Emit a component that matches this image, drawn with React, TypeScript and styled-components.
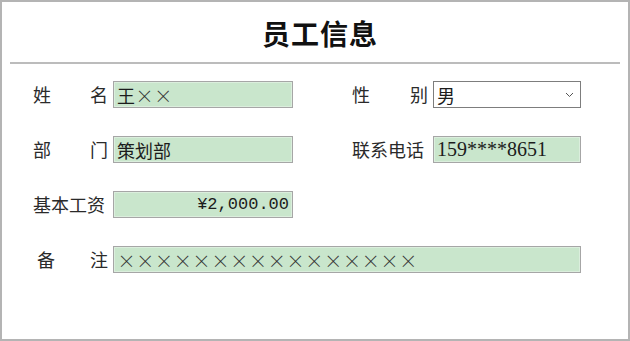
import styled, { createGlobalStyle } from 'styled-components';

const GlobalStyle = createGlobalStyle`
  html, body {
    margin: 0;
    padding: 0;
    background: #ffffff;
  }
  body {
    font-family: "Noto Sans CJK SC", "Liberation Serif", serif;
    color: #222;
  }
`;

const Frame = styled.div`
  box-sizing: border-box;
  width: 630px;
  height: 341px;
  border: 2px solid #b4b4b4;
  border-left-width: 2px;
  padding: 0 8px;
`;

const Header = styled.header`
  height: 58px;
  display: flex;
  align-items: center;
  justify-content: center;
  padding-left: 10px;
  padding-top: 2px;
  border-bottom: 2px solid #bcbcbc;
  box-sizing: border-box;
  height: 62px;
`;

const Title = styled.h1`
  margin: 0;
  font-size: 28px;
  font-weight: 700;
  line-height: 1;
  color: #111;
  letter-spacing: 1px;
`;

const Form = styled.div`
  display: grid;
  grid-template-columns: 260px 229px;
  column-gap: 59px;
  row-gap: 28px;
  padding: 17px 0 0 23px;
`;

const Field = styled.div<{ $wide?: boolean }>`
  display: flex;
  align-items: center;
  gap: 5px;
  height: 27px;
  grid-column: ${(p) => (p.$wide ? '1 / -1' : 'auto')};
`;

const Label = styled.span<{ $w?: number; $shift?: number }>`
  display: flex;
  justify-content: space-between;
  flex: 0 0 auto;
  width: ${(p) => p.$w ?? 75}px;
  padding-left: ${(p) => p.$shift ?? 0}px;
  box-sizing: border-box;
  font-size: 18px;
  line-height: 27px;
  color: #2a2a2a;
`;

const Box = styled.div<{ $align?: 'left' | 'right'; $font?: 'cjk' | 'serif' | 'mono' }>`
  flex: 1;
  height: 27px;
  box-sizing: border-box;
  display: flex;
  align-items: center;
  justify-content: ${(p) => (p.$align === 'right' ? 'flex-end' : 'flex-start')};
  padding: 0 3px;
  background: #c9e6cc;
  border: 1px solid #a6a6a6;
  box-shadow: inset 0 0 0 1px #dbeedd;
  color: #1c1c1c;
  font-size: ${(p) => (p.$font === 'mono' ? '17px' : p.$font === 'serif' ? '20px' : '18px')};
  font-family: ${(p) =>
    p.$font === 'mono'
      ? '"Liberation Mono", monospace'
      : p.$font === 'serif'
      ? '"Liberation Serif", serif'
      : '"Noto Sans CJK SC", sans-serif'};
  white-space: nowrap;
  overflow: hidden;
`;

const Cross = styled.span`
  display: inline-block;
  width: 18.8px;
  text-align: center;
  font-weight: 300;
  color: #333;
`;

const Select = styled.div`
  flex: 1;
  height: 27px;
  box-sizing: border-box;
  display: flex;
  align-items: center;
  justify-content: space-between;
  padding: 0 6px 0 3px;
  background: #fff;
  border: 1px solid #7d7d7d;
  font-size: 18px;
  color: #1c1c1c;
`;

function Crosses({ n }: { n: number }) {
  return (
    <>
      {Array.from({ length: n }).map((_, i) => (
        <Cross key={i}>×</Cross>
      ))}
    </>
  );
}

function Chevron() {
  return (
    <svg width="9" height="6" viewBox="0 0 9 6">
      <polyline points="1,1 4.5,4.5 8,1" fill="none" stroke="#555" strokeWidth="1" />
    </svg>
  );
}

export default function App() {
  return (
    <>
      <GlobalStyle />
      <Frame>
        <Header>
          <Title>员工信息</Title>
        </Header>
        <Form>
          <Field>
            <Label>
              <span>姓</span>
              <span>名</span>
            </Label>
            <Box>
              王<Crosses n={2} />
            </Box>
          </Field>
          <Field>
            <Label $w={76}>
              <span>性</span>
              <span>别</span>
            </Label>
            <Select>
              <span>男</span>
              <Chevron />
            </Select>
          </Field>
          <Field>
            <Label>
              <span>部</span>
              <span>门</span>
            </Label>
            <Box>策划部</Box>
          </Field>
          <Field>
            <Label $w={76}>联系电话</Label>
            <Box $font="serif">159****8651</Box>
          </Field>
          <Field>
            <Label>基本工资</Label>
            <Box $align="right" $font="mono">
              ¥2,000.00
            </Box>
          </Field>
          <div />
          <Field $wide>
            <Label $shift={4}>
              <span>备</span>
              <span>注</span>
            </Label>
            <Box>
              <Crosses n={16} />
            </Box>
          </Field>
        </Form>
      </Frame>
    </>
  );
}
